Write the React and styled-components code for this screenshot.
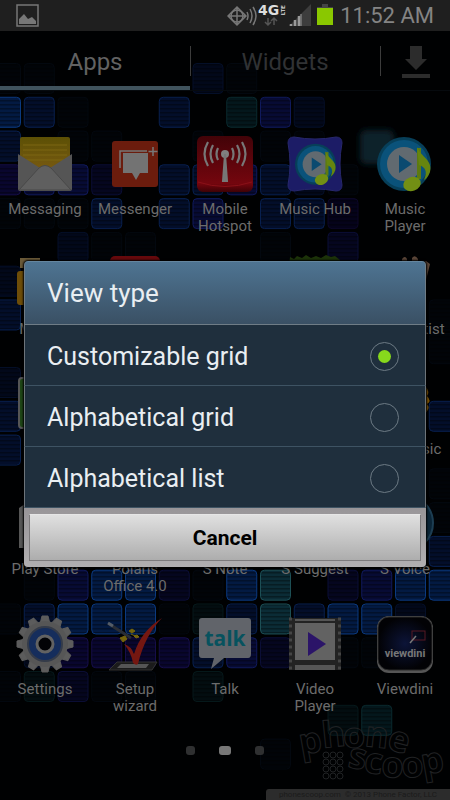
import React, { useState } from "react";
import styled, { createGlobalStyle } from "styled-components";

const TILE_COLORS = {
  B: ["#031a42", "#0b3a80"],
  b: ["#030e2a", "#08204f"],
  d: ["#02081a", "#040f28"],
  f: ["#010408", "#03080f"],
  I: ["#070b34", "#101a5c"],
  i: ["#05061f", "#0b0e36"],
  P: ["#09062e", "#160e4a"],
  p: ["#05031a", "#0c0728"],
  T: ["#0b2c36", "#1d4f55"],
  t: ["#04171c", "#0a2a2e"],
  g: ["#030d10", "#06191b"],
};

const TILE_ROWS = [
  "ff....df......",
  "Bbf..b.tId....",
  "b.ff..f.ff....",
  "PIIi.bbIbdf...",
  "fffb.bI.bbp...",
  "..dff...f.i...",
  "d.............",
  "b............f",
  ".............f",
  "d.............",
  "b............b",
  "b.............",
  ".............f",
  ".............f",
  ".............b",
  ".fIBBifBT.iIBB",
  "fbBBBfgbTbBBd.",
  ".dPPPPbIi.ff..",
  "fgiff.g.......",
  "..........gt..",
  "........f.....",
];

const Wallpaper = () => (
  <WallpaperSvg viewBox="0 0 450 800" preserveAspectRatio="xMidYMin slice">
    <defs>
      <pattern id="lines" width="4" height="4" patternUnits="userSpaceOnUse">
        <rect width="4" height="1.5" fill="#000" opacity="0.35" />
      </pattern>
      <filter id="soft">
        <feGaussianBlur stdDeviation="3" />
      </filter>
    </defs>
    {TILE_ROWS.map((row, r) =>
      row.split("").map((key, c) => {
        if (!TILE_COLORS[key]) return null;
        const [fill, stroke] = TILE_COLORS[key];
        const x = -9.5 + c * 33.75;
        const y = 63.5 + r * 33.78;
        return (
          <g key={`${r}-${c}`}>
            <rect x={x} y={y} width="30" height="30" rx="4" fill={fill} />
            <rect x={x} y={y} width="30" height="30" rx="4" fill="url(#lines)" stroke={stroke} />
          </g>
        );
      })
    )}
    <rect x="360" y="130" width="34" height="34" rx="6" fill="#10202b" filter="url(#soft)" />
  </WallpaperSvg>
);

const Note = () => (
  <>
    <path d="M42 12 V43" stroke="#5d7a10" strokeWidth="4" />
    <path d="M40 11 C44 21 56 24 53 36 C51 41 49 43 47 44 C51 35 48 31 42 29 Z" fill="#66850f" />
    <ellipse cx="35" cy="48" rx="9" ry="7" fill="#728f14" transform="rotate(-20 35 48)" />
  </>
);

const Disc = () => (
  <>
    <circle cx="27" cy="28" r="27" fill="#073f59" />
    <circle cx="27" cy="28" r="24" fill="#0a527a" />
    <circle cx="27" cy="28" r="17" fill="#616a70" />
    <path d="M22 19 L35 28 L22 37 Z" fill="#0b4a70" />
    <Note />
  </>
);

const gearTeeth = Array.from({ length: 12 }, (_, i) => i * 30);
const filmHoles = [3, 10, 17, 24, 31, 38, 45, 52];

const icons = {
  messaging: (
    <>
      <defs>
        <linearGradient id="letter" x2="0" y2="1">
          <stop offset="0" stopColor="#5c5005" />
          <stop offset="1" stopColor="#7a5a12" />
        </linearGradient>
      </defs>
      <rect x="3" y="1" width="50" height="36" rx="2" fill="url(#letter)" />
      <path d="M6 9 H50 M6 14 H50 M6 19 H50 M6 24 H50" stroke="#7d6712" strokeWidth="1" />
      <path d="M1 18 L23 32 Q28 28 33 32 L55 18 V53 Q55 55 53 55 H3 Q1 55 1 53 Z" fill="#555" />
      <path d="M2 54 L22 32 Q28 27 34 32 L54 54 Z" fill="#5f5f5f" stroke="#484848" strokeWidth="1" />
    </>
  ),
  messenger: (
    <>
      <rect x="5" y="5" width="46" height="46" rx="3" fill="#6b1c0d" />
      <path d="M13 32 V15 H40" fill="none" stroke="#777" strokeWidth="1.5" />
      <path d="M16 17 H41 V37 H33 L29 44 L25 37 H16 Z" fill="#737373" />
      <path d="M46 11 V20 M41.500 15.500 H50.500" stroke="#777" strokeWidth="1.5" />
    </>
  ),
  hotspot: (
    <>
      <defs>
        <linearGradient id="hot" x2="0" y2="1">
          <stop offset="0" stopColor="#420308" />
          <stop offset="0.85" stopColor="#74060e" />
          <stop offset="1" stopColor="#3e0206" />
        </linearGradient>
      </defs>
      <rect x="0" y="0" width="56" height="56" rx="6" fill="url(#hot)" />
      <path d="M1 46 Q28 55 55 46" fill="none" stroke="#8a1118" strokeWidth="1" />
      <circle cx="28" cy="18" r="4" fill="#808080" />
      <path d="M28 18 L26 45 H30 Z" stroke="#777" strokeWidth="2" fill="#777" />
      <path
        d="M21 12 Q18 18 21 24 M16 9 Q11 18 16 27 M11 6 Q4 18 11 30 M35 12 Q38 18 35 24 M40 9 Q45 18 40 27 M45 6 Q52 18 45 30"
        fill="none"
        stroke="#777"
        strokeWidth="2.2"
      />
    </>
  ),
  musichub: (
    <>
      <path
        d="M7 1 Q28 5 49 1 Q55 1 55 7 Q51 28 55 49 Q55 55 49 55 Q28 51 7 55 Q1 55 1 49 Q5 28 1 7 Q1 1 7 1 Z"
        fill="#1c1c66"
        stroke="#27276b"
      />
      <g transform="translate(8 7) scale(.76)">
        <Disc />
      </g>
    </>
  ),
  musicplayer: <Disc />,
  myfiles: (
    <>
      <rect x="3" y="2" width="20" height="10" fill="#6b5a38" />
      <rect x="0" y="15" width="50" height="34" rx="3" fill="#6e4d08" />
    </>
  ),
  red: <rect x="3" y="0" width="50" height="50" rx="5" fill="#66090c" />,
  grass: (
    <path d="M2 10 L3 1 L7 3 L10 0 L15 2 L19 -1 L24 2 L29 0 L34 2 L39 -1 L44 1 L48 0 L53 4 V20 H2 Z" fill="#1c3309" />
  ),
  artist: (
    <path d="M25 14 V3 Q28 -1 30 3 V10 L35 10 V2 Q38 -2 41 3 V8 L49 5 L53 8 L49 24 H25 Z" fill="#5b4638" />
  ),
  green: <rect x="2" y="2" width="50" height="50" rx="3" fill="#1e4616" stroke="#555" strokeWidth="2" />,
  playmusic: <path d="M40 8 L49 11 Q53 16 50 20 Q55 25 50 28 Q54 33 47 38 H35 Z" fill="#7a5205" />,
  bag: <path d="M2 12 L8 8 L50 8 L46 52 L2 52 Z" fill="#565656" />,
  voice: (
    <>
      <circle cx="28" cy="27" r="28" fill="#0a2436" stroke="#1c3d52" strokeWidth="2" />
      <circle cx="28" cy="27" r="22" fill="#0d3049" />
    </>
  ),
  settings: (
    <>
      {gearTeeth.map((deg) => (
        <path
          key={deg}
          d="M23 8 L25 0 H31 L33 8 Z"
          fill="#5c5c5c"
          stroke="#5c5c5c"
          strokeWidth="1"
          transform={`rotate(${deg} 28 28)`}
        />
      ))}
      <circle cx="28" cy="28" r="23" fill="#565656" />
      <circle cx="28" cy="28" r="17" fill="#152d5c" stroke="#343b49" strokeWidth="2" />
      <circle cx="28" cy="28" r="8" fill="#020306" stroke="#626262" strokeWidth="3" />
    </>
  ),
  wizard: (
    <>
      <path d="M10 46 H50 L45 54 H2 Z" fill="#1b1b1b" stroke="#333" />
      <path d="M14 48 H42 L39 52 H10 Z" fill="#555" />
      <path d="M2 8 L24 22" stroke="#292d35" strokeWidth="3" />
      <path d="M1 7 L6 10" stroke="#555d68" strokeWidth="3" />
      <path
        d="M22 15 l3 -2 3 2 -3 2 Z M27 20 l3 -1 2 2 -3 1 Z M13 22 l5 -2 2 3 -4 3 Z M24 18 l4 2"
        fill="#75640c"
        stroke="#75640c"
      />
      <path d="M17 28 Q24 30 27 38 Q34 15 55 2 Q38 19 31 48 Q29 50 26 47 Q24 36 17 28 Z" fill="#741711" />
    </>
  ),
  talk: (
    <>
      <path d="M5 2 H51 Q54 2 54 5 V38 Q54 42 51 42 H27 L14 53 L17 42 H5 Q2 42 2 39 V5 Q2 2 5 2 Z" fill="#61646a" />
      <text
        x="28"
        y="30"
        textAnchor="middle"
        fontFamily="'Open Sans', sans-serif"
        fontWeight="700"
        fontSize="21"
        fill="#07525e"
      >
        talk
      </text>
    </>
  ),
  video: (
    <>
      <rect x="2" y="2" width="52" height="52" fill="#232323" />
      <rect x="8" y="7" width="40" height="37" fill="#626262" />
      <rect x="8" y="3" width="40" height="2" fill="#555" />
      <rect x="8" y="49" width="40" height="5" fill="#565656" />
      {filmHoles.map((y) => (
        <path key={y} d={`M2 ${y} h3 M51 ${y} h3`} stroke="#454545" strokeWidth="3" />
      ))}
      <path d="M21 16 L39 28 L21 40 Z" fill="#2b1468" />
    </>
  ),
  viewdini: (
    <>
      <defs>
        <radialGradient id="dini">
          <stop offset="0" stopColor="#0c1438" />
          <stop offset="1" stopColor="#020205" />
        </radialGradient>
      </defs>
      <rect x="0" y="0" width="56" height="57" rx="12" fill="#555" />
      <rect x="1" y="1" width="54" height="53" rx="11" fill="url(#dini)" stroke="#2a2a2a" />
      <rect x="35" y="15" width="13" height="9" fill="none" stroke="#571824" />
      <path d="M33 27 L39 20" stroke="#777" strokeWidth="1.5" />
      <text
        x="28"
        y="41"
        textAnchor="middle"
        fontFamily="Roboto, sans-serif"
        fontWeight="700"
        fontSize="11"
        fill="#777"
      >
        viewdini
      </text>
    </>
  ),
};

const APPS = [
  ["messaging", "Messaging"],
  ["messenger", "Messenger"],
  ["hotspot", "Mobile Hotspot"],
  ["musichub", "Music Hub"],
  ["musicplayer", "Music Player"],
  ["myfiles", "My files"],
  ["red"],
  [],
  ["grass"],
  ["artist", "Paper Artist"],
  ["green"],
  [],
  [],
  [],
  ["playmusic", "Play Music"],
  ["bag", "Play Store"],
  [null, "Polaris Office 4.0"],
  [null, "S Note"],
  [null, "S Suggest"],
  ["voice", "S Voice"],
  ["settings", "Settings"],
  ["wizard", "Setup wizard"],
  ["talk", "Talk"],
  ["video", "Video Player"],
  ["viewdini", "Viewdini"],
];

const VIEW_TYPES = ["Customizable grid", "Alphabetical grid", "Alphabetical list"];

const StatusIcons = () => (
  <svg width="106" height="27" viewBox="228 3 106 27" fill="none">
    <g stroke="#777" strokeWidth="1.5">
      <circle cx="238" cy="17" r="6" />
      <path d="M229 17 H247 M238 8 V26 M229 17 L238 8 L247 17 L238 26 Z" />
      <path d="M248 13 Q250 17 248 21 M251 10 Q255 17 251 24 M254 8 Q260 17 254 26" />
    </g>
    <text x="259" y="16" fontFamily="'DejaVu Sans', sans-serif" fontWeight="700" fontSize="14" fill="#ddd">
      4G
    </text>
    <text
      transform="translate(286 16) rotate(-90)"
      fontFamily="Roboto, sans-serif"
      fontWeight="700"
      fontSize="6"
      fill="#ddd"
    >
      LTE
    </text>
    <path d="M269 19 V26 M266 23 L269 26 L272 23 M275 26 V19 M272 22 L275 19 L278 22" stroke="#555" strokeWidth="1.500" />
    <path d="M290 27 L312 5 V27 Z" fill="#3d3d3d" />
    <path d="M292 27 V25 M296 27 V21 M300 27 V17" stroke="#999" strokeWidth="2.500" />
    <path d="M302 27 V15" stroke="#999" strokeWidth="1" />
    <rect x="323" y="5" width="6" height="3" fill="#444" />
    <rect x="318" y="8" width="16" height="2" fill="#444" />
    <rect x="318" y="9" width="16" height="17" fill="#8ac800" />
  </svg>
);

const beads = [0, 1, 2, 3].flatMap((r) => [0, 1, 2].map((c) => [26 + c * 7, 38 + r * 7]));

const Watermark = () => (
  <WatermarkBox>
    <svg width="150" height="68" viewBox="0 0 150 68" overflow="visible" fill="none" stroke="#202224">
      <g fontFamily="'Open Sans', sans-serif" fontWeight="700" fontSize="36">
        <text x="1 23 43 64 86" y="38 31 31 29 32" rotate="-10 -6 0 6 14">
          phone
        </text>
        <text x="47 63 81 102 123" y="50 55 60 61 58" rotate="10 8 2 -4 -10">
          scoop
        </text>
      </g>
      {beads.map(([x, y]) => (
        <circle key={`${x}-${y}`} cx={x} cy={y} r="3" />
      ))}
    </svg>
    <Copyright>phonescoop.com &nbsp;© 2013 Phone Factor, LLC</Copyright>
  </WatermarkBox>
);

const App = () => {
  const [viewType, setViewType] = useState(VIEW_TYPES[0]);
  const [isOpen, setOpen] = useState(true);

  return (
    <Screen>
      <GlobalStyle />
      <Wallpaper />
      <StatusBar>
        <svg width="23" height="23" viewBox="0 0 23 23">
          <rect x="1" y="1" width="21" height="21" fill="none" stroke="#777" strokeWidth="1.500" />
          <path d="M3 20 V15 L8 10 L12 15 L16 13 L20 17 V20 Z" fill="#777" />
        </svg>
        <StatusRight>
          <StatusIcons />
          <span>11:52 AM</span>
        </StatusRight>
      </StatusBar>
      <Tabs>
        <Tab $active>Apps</Tab>
        <Tab>Widgets</Tab>
        <DownloadButton aria-label="Downloads">
          <svg width="28" height="32" viewBox="0 0 28 32" fill="#2c2c2c">
            <path d="M8 0 H20 V13 H25 L14 24 L3 13 H8 Z" />
            <rect x="0" y="28" width="28" height="4" />
          </svg>
        </DownloadButton>
      </Tabs>
      <AppGrid>
        {APPS.map(([icon, label], i) => (
          <AppItem key={i}>
            <svg width="56" height="56" viewBox="0 0 56 56" overflow="visible">
              {icons[icon]}
            </svg>
            {label && <AppLabel>{label}</AppLabel>}
          </AppItem>
        ))}
      </AppGrid>
      <Pager>
        <Dot />
        <Dot $active />
        <Dot />
      </Pager>
      <Watermark />
      {isOpen && (
        <Overlay>
          <Dialog role="dialog" aria-labelledby="view-type-title">
            <DialogTitle id="view-type-title">View type</DialogTitle>
            {VIEW_TYPES.map((type) => (
              <Option key={type}>
                <span>{type}</span>
                <Radio name="viewType" checked={viewType === type} onChange={() => setViewType(type)} />
              </Option>
            ))}
            <DialogFooter>
              <CancelButton onClick={() => setOpen(false)}>Cancel</CancelButton>
            </DialogFooter>
          </Dialog>
        </Overlay>
      )}
    </Screen>
  );
};

export default App;

const GlobalStyle = createGlobalStyle`
  * {
    box-sizing: border-box;
  }
  body {
    margin: 0;
    background: #000;
    font-family: Roboto, sans-serif;
  }
  button {
    font-family: inherit;
    border: none;
    padding: 0;
    cursor: pointer;
  }
`;

const Screen = styled.div`
  position: relative;
  display: flex;
  flex-direction: column;
  min-height: 100vh;
  overflow: hidden;
  background: #000102;
`;

const WallpaperSvg = styled.svg`
  position: absolute;
  inset: 0;
  width: 100%;
  height: 100%;
`;

const StatusBar = styled.header`
  position: relative;
  display: flex;
  align-items: center;
  justify-content: space-between;
  height: 31px;
  padding: 0 16px;
  background: #1f1f1f;
  color: #848484;
  font-size: 22px;
`;

const StatusRight = styled.div`
  display: flex;
  align-items: center;
  gap: 7px;
`;

const Tabs = styled.nav`
  position: relative;
  display: grid;
  grid-template-columns: 19fr 19fr 7fr;
  height: 60px;
  border-bottom: 1px solid #060a0e;
`;

const Tab = styled.button`
  position: relative;
  padding-top: 2px;
  background: none;
  font-size: 24px;
  color: ${({ $active }) => ($active ? "#626262" : "#303234")};
  box-shadow: ${({ $active }) => ($active ? "inset 0 -4px #40535d" : "none")};

  &::after {
    content: "";
    position: absolute;
    right: -1px;
    top: 15px;
    width: 1px;
    height: 30px;
    background: #3c3c3c;
  }
`;

const DownloadButton = styled.button`
  display: grid;
  place-items: center;
  padding: 2px 0 0 2px;
  background: none;
`;

const AppGrid = styled.main`
  position: relative;
  display: grid;
  grid-template-columns: repeat(5, 1fr);
  grid-auto-rows: 120px;
  padding-top: 45px;
`;

const AppItem = styled.div`
  display: flex;
  flex-direction: column;
  align-items: center;
  gap: 9px;
`;

const AppLabel = styled.span`
  max-width: 80px;
  font-size: 15px;
  line-height: 17px;
  text-align: center;
  color: #6c6c6c;
`;

const Pager = styled.div`
  position: relative;
  display: flex;
  align-items: center;
  justify-content: center;
  gap: 24px;
  padding-top: 10px;
`;

const Dot = styled.span`
  width: ${({ $active }) => ($active ? "12px" : "9px")};
  height: 9px;
  border-radius: 3px;
  background: ${({ $active }) => ($active ? "#777" : "#2f3031")};
`;

const WatermarkBox = styled.div`
  position: absolute;
  right: 0;
  bottom: 0;
  display: flex;
  flex-direction: column;
  align-items: flex-end;
  gap: 4px;
`;

const Copyright = styled.small`
  width: 184px;
  border-top-left-radius: 3px;
  background: #2c2c2c;
  color: #1b1b1b;
  font-size: 8px;
  line-height: 11px;
  text-align: center;
  white-space: nowrap;
`;

const Overlay = styled.div`
  position: absolute;
  inset: 31px 0 0;
  display: flex;
  align-items: center;
  padding: 0 24px 3px;
`;

const Dialog = styled.section`
  flex: 1;
  border-radius: 4px;
  overflow: hidden;
  background: #1f2f3d;
  box-shadow: 0 0 2px 1px #000;
`;

const DialogTitle = styled.h1`
  margin: 0;
  padding: 0 22px;
  height: 64px;
  line-height: 62px;
  font-size: 26px;
  font-weight: 400;
  color: #e9eef2;
  border: 1px solid #6f7c86;
  border-top-color: #64869f;
  border-radius: 4px 4px 0 0;
  background: linear-gradient(#4e7492, #3a5064);
`;

const Option = styled.label`
  display: flex;
  align-items: center;
  justify-content: space-between;
  height: 61px;
  padding: 3px 26px 0 22px;
  border: 1px solid #6d747a;
  border-top: none;
  border-bottom-color: #3e5363;
  font-size: 25px;
  color: #e9eef2;
  cursor: pointer;
`;

const Radio = styled.input.attrs({ type: "radio" })`
  appearance: none;
  flex: none;
  display: grid;
  place-items: center;
  width: 29px;
  height: 29px;
  margin: 0;
  border: 1px solid #6c7a84;
  border-radius: 50%;

  &:checked::before {
    content: "";
    width: 13px;
    height: 13px;
    border-radius: 50%;
    background: #87d81c;
  }
`;

const DialogFooter = styled.footer`
  padding: 6px 5px;
  background: linear-gradient(#989598, #b1afb1);
`;

const CancelButton = styled.button`
  display: block;
  width: 100%;
  height: 47px;
  border: 1px solid #7c7a7c;
  border-top-color: #e6e6e6;
  background: linear-gradient(#e0e0e0, #adadad);
  color: #000;
  font-size: 21px;
  font-weight: 700;
`;
